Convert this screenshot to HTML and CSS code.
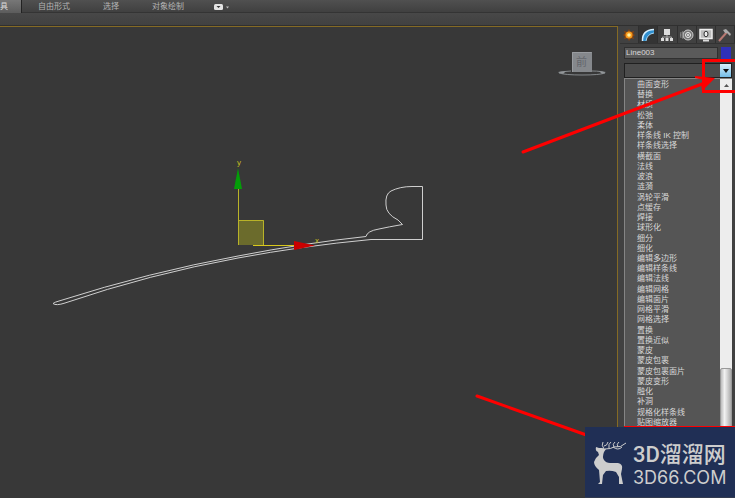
FILE: index.html
```html
<!DOCTYPE html>
<html lang="zh-CN">
<head>
<meta charset="utf-8">
<title>Line003</title>
<link rel="stylesheet" href="styles.css">
</head>
<body>
<div class="app">
  <header class="ribbon">
    <nav class="tabs">
      <button class="tab tab-active">具</button>
      <button class="tab tab-form">自由形式</button>
      <button class="tab tab-select">选择</button>
      <button class="tab tab-paint">对象绘制</button>
      <button class="tab tab-more" aria-label="更多">
        <svg width="16" height="8" viewBox="0 0 16 8"><rect x="0" y="1" width="9" height="6" rx="1.5" fill="#e4e4e4"/><path d="M2.500 3h4l-2 2z" fill="#333"/><path d="M12 3.500h3l-1.500 2z" fill="#bbb"/></svg>
      </button>
    </nav>
    <div class="strip"></div>
  </header>
  <main class="work">
    <section class="viewport" aria-label="前">
      <svg class="scene" width="617" height="470" viewBox="0 27 617 470">
        <path d="M53 303.500Q55 302 59 301Q150 272 238 256Q305 243 366 236.500Q367 231 379 229Q388 227 402.500 224.500L398 220Q386 214 386 205Q385 194 391 191Q400 186.500 412 186.500H422.500V239.500H371Q302 246 238 258Q150 274 65 303Q56 306 53 303.500Z" fill="none" stroke="#cfcfcf"/>
        <rect x="238" y="220" width="26" height="25" fill="#6b6b2c"/>
        <path d="M238.500 189V245M238 220.500H263.500V245" fill="none" stroke="#b9b328"/>
        <rect x="253" y="245" width="42" height="1" fill="#d9c81c"/>
        <path d="M238 168L242 189H234Z" fill="#049d08"/>
        <path d="M294 241V250L315 245.500Z" fill="#c80000"/>
        <text class="axis" x="237" y="165">y</text>
        <text class="axis" x="315" y="243">x</text>
        <g class="cube">
          <path d="M571 71Q557 72 559 73Q565 75 582 75Q600 75 605 73Q602 71 592 71" fill="none" stroke="#85898c"/>
          <path d="M558 72l8-1-3 3zM606 72l-7-1 3 3z" fill="#929699"/>
          <rect x="572" y="52" width="20" height="20" fill="#85888c"/>
          <path d="M572.500 72V52.500H591.500" fill="none" stroke="#999ca0"/>
          <text class="face" x="576" y="66">前</text>
        </g>
      </svg>
    </section>
    <aside class="panel">
      <div class="tools">
        <button class="tool" aria-label="创建"><svg width="14" height="14" viewBox="0 0 14 14"><path d="M7 1l1.500 3L12 3l-1 3 2 1-2 1.500 1 2.500-3-.8L7 13l-1.500-2.800L2 11l1-2.500L1 7l2-1.500L2 3l3.500 1z" fill="#8a4510"/><circle cx="7" cy="7" r="3.500" fill="#f79a1d"/><circle cx="7" cy="7" r="1.800" fill="#fff2a0"/></svg></button>
        <button class="tool tool-on" aria-label="修改"><svg width="14" height="14" viewBox="0 0 14 14"><path d="M1 13Q1 2 13 1V5Q6 6 5 13Z" fill="#2f8fd0"/><path d="M1.500 13Q1 2 13 1.500" fill="none" stroke="#d7f0ff" stroke-width="1.500"/><path d="M5 13Q6 6 13 5" fill="none" stroke="#a8d8f5"/></svg></button>
        <button class="tool" aria-label="层次"><svg width="14" height="14" viewBox="0 0 14 14"><rect x="4" y="1" width="6" height="6" fill="#ddd"/><path d="M7 7v3M2.500 11V9h9v2" fill="none" stroke="#aaa"/><path d="M1 10h3v3H1zM5.500 10h3v3h-3zM10 10h3v3h-3z" fill="#ddd"/></svg></button>
        <button class="tool" aria-label="运动"><svg width="14" height="14" viewBox="0 0 14 14"><circle cx="8" cy="7" r="5" fill="#777" stroke="#ccc"/><circle cx="8" cy="7" r="2.500" fill="none" stroke="#eee"/><circle cx="8" cy="7" r="1" fill="#eee"/><path d="M1 4q-1 3 0 6M3 3q-2 4 0 8" fill="none" stroke="#888"/></svg></button>
        <button class="tool" aria-label="显示"><svg width="14" height="14" viewBox="0 0 14 14"><rect x="1" y="1.500" width="12" height="9" fill="#bbb" stroke="#eee" stroke-width="1.500"/><path d="M4 12.500h6" stroke="#ddd" stroke-width="2"/><ellipse cx="7" cy="6" rx="2" ry="2.800" fill="#eee" stroke="#333"/></svg></button>
        <button class="tool" aria-label="工具"><svg width="14" height="14" viewBox="0 0 14 14"><path d="M9 4L1 13" stroke="#b77972" stroke-width="2"/><path d="M5 2L8 1l5 5-1 2-3-3-2 0z" fill="#aaa"/></svg></button>
      </div>
      <div class="name-row">
        <input class="name" type="text" value="Line003" aria-label="名称">
        <button class="swatch" aria-label="颜色"></button>
      </div>
      <div class="combo">
        <select class="picker" aria-label="修改器列表"><option></option></select>
        <span class="arrow"><svg width="6" height="4" viewBox="0 0 6 4"><path d="M0 0h6L3 4z" fill="#111"/></svg></span>
      </div>
      <div class="drop">
        <ul class="list">
          <li>曲面变形</li><li>替换</li><li>材质</li><li>松弛</li><li>柔体</li><li>样条线 IK 控制</li><li>样条线选择</li><li>横截面</li><li>法线</li><li>波浪</li><li>涟漪</li><li>涡轮平滑</li><li>点缓存</li><li>焊接</li><li>球形化</li><li>细分</li><li>细化</li><li>编辑多边形</li><li>编辑样条线</li><li>编辑法线</li><li>编辑网格</li><li>编辑面片</li><li>网格平滑</li><li>网格选择</li><li>置换</li><li>置换近似</li><li>蒙皮</li><li>蒙皮包裹</li><li>蒙皮包裹面片</li><li>蒙皮变形</li><li>融化</li><li>补洞</li><li>规格化样条线</li><li>贴图缩放器</li>
        </ul>
        <div class="scroll">
          <button class="up" aria-label="向上"><svg width="5" height="3" viewBox="0 0 5 3"><path d="M0 3h5L2.500 0z" fill="#555"/></svg></button>
          <div class="thumb"></div>
        </div>
      </div>
    </aside>
  </main>
  <svg class="marks" width="735" height="498" viewBox="0 0 735 498">
    <g fill="none" stroke="#fe0000" stroke-width="3">
      <path d="M736 60.500H703.500V91.500H736"/>
      <path d="M523 152L702 84" stroke-linecap="round"/>
      <path d="M477 396L592 437" stroke-linecap="round"/>
      <path d="M624 427H735" stroke-width="2"/>
    </g>
    <path d="M695 76L715 78L702 91L701 84L704 80L695 78Z" fill="#fe0000"/>
  </svg>
  <div class="brand">
    <svg class="deer" width="34" height="46" viewBox="0 0 34 46">
      <path d="M2 7L5 8L8 8L12 9L10 12Q8 17 10 20Q12 23 16 23H24Q29 24 28 29L27 34L29 44H25L25 37L22 32Q17 30 12 31L9 35L8 44H4L6 42L5 30Q0 26 0 22Q1 18 5 15L4 12Q1 11 2 7Z" fill="#cdcdcd"/>
      <path d="M10 9Q7 5 9 2M10 6Q13 6 14 2M11 9Q17 9 20 7Q27 8 32 3M15 8Q14 4 17 2M20 7Q18 4 21 2M24 7Q22 4 25 2M19 7Q24 11 28 7" fill="none" stroke="#cdcdcd"/>
    </svg>
    <div class="words"><strong class="cn">3D溜溜网</strong><span class="en">3D66.COM</span></div>
  </div>
</div>
</body>
</html>
```
FILE: styles.css
```css
* { box-sizing: border-box; }
body {
  margin: 0;
  background: #383838;
  color: #d8d8d8;
  font: 8px/10px "Liberation Sans", "Noto Sans CJK SC", sans-serif;
}
button, input, select { font: inherit; color: inherit; border: 0; padding: 0; margin: 0; border-radius: 0; }
button { background: none; display: flex; align-items: center; justify-content: center; }
.app { position: relative; display: flex; flex-direction: column; min-height: 100vh; overflow: hidden; }
.ribbon { background: #454545; }
.tabs { display: flex; height: 13px; background: linear-gradient(#505050, #404040); border-bottom: 1px solid #343434; }
.tab { height: 13px; padding-top: 1px; color: #b4b4b4; white-space: nowrap; }
.tab-active { width: 22px; justify-content: flex-start; background: linear-gradient(#777, #5c5c5c); border-right: 1px solid #222; color: #ddd; }
.tab-form { margin-left: 16px; }
.tab-select { margin-left: 33px; }
.tab-paint { margin-left: 33px; }
.tab-more { margin-left: 30px; }
.strip { height: 13px; background: linear-gradient(#484848, #414141); border-bottom: 1px solid #303030; }
.work { flex: 1; display: grid; grid-template-columns: minmax(0, 1fr) 117px; }
.viewport { border-top: 1px solid #846a25; border-right: 1px solid #846a25; overflow: hidden; }
.scene { display: block; }
.axis { font-size: 8px; fill: #c4bf20; }
.face { font-size: 11px; fill: #64676c; }
.panel { display: flex; flex-direction: column; background: #414141; padding: 0 3px 0 6px; }
.tools { display: flex; height: 18px; margin: 0 -3px 0 -4px; border-bottom: 1px solid #333; }
.tool { flex: 1; height: 17px; border-right: 1px solid #2f2f2f; }
.tool-on { background: #343434; }
.name-row { display: flex; gap: 3px; height: 12px; margin: 3px 1px 0 0; }
.name { flex: 1; min-width: 0; background: #5a5a5a; border: 1px solid #303030; padding-left: 1px; }
.swatch { width: 10px; background: #3030ba; }
.combo { display: flex; height: 15px; margin-top: 4px; border: 1px solid #202020; }
.picker { flex: 1; min-width: 0; appearance: none; background: #4c4c4c; }
.arrow { display: flex; width: 11px; align-items: center; justify-content: center; background: linear-gradient(#d8f0fb, #73bce7); }
.drop { flex: 1; display: flex; background: #555; border-left: 1px solid #858585; border-top: 1px solid #858585; }
.list { flex: 1; margin: 0 0 70px; padding: 1px 0 0 12px; list-style: none; display: grid; grid-auto-rows: 1fr; }
.list li { line-height: 10px; white-space: nowrap; min-height: 0; }
.scroll { display: flex; flex-direction: column; justify-content: space-between; width: 12px; background: #ededed; }
.up { height: 12px; }
.thumb { height: 31%; background: linear-gradient(90deg, #bbb, #f1f1f1 35%, #d8d8d8 60%, #aaa); border: 1px solid #999; border-radius: 2px; }
.marks { position: absolute; top: 0; right: 0; pointer-events: none; }
.brand { position: absolute; right: 0; bottom: 0; width: 150px; height: 71px; display: flex; gap: 5px; padding: 13px 0 0 9px; background: #202f55; border-bottom: 1px solid #333b50; color: #cdcdcd; }
.words { display: flex; flex-direction: column; font-family: Roboto, "Noto Sans CJK SC", sans-serif; }
.cn { font-size: 22px; line-height: 30px; font-weight: 500; white-space: nowrap; }
.en { font-family: Inter, sans-serif; font-size: 18px; line-height: 16px; white-space: nowrap; }
```
